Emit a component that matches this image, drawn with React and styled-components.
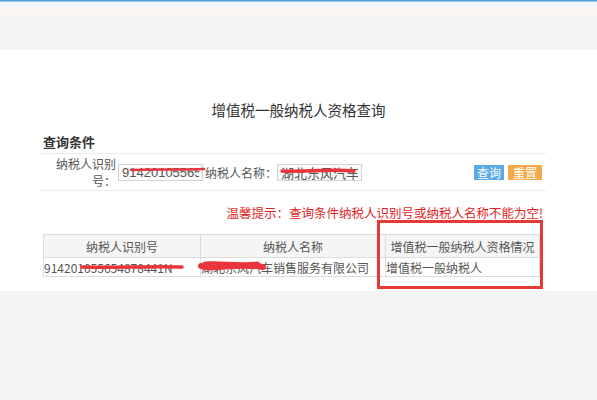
import styled, { createGlobalStyle } from 'styled-components';

const GlobalStyle = createGlobalStyle`
  html, body {
    margin: 0;
    padding: 0;
    background: #f4f4f4;
    font-family: "Noto Sans CJK SC", "Liberation Sans", sans-serif;
    color: #333;
  }
`;

// red pen marks drawn over the sensitive values
const redactions = [
  { d: 'M131 170 C150 169, 180 170, 204 169', w: 2.5 },
  { d: 'M282 171 C300 172, 330 169, 354 171', w: 3.5 },
  { d: 'M82 267 C110 268, 150 266, 182 267', w: 3.5 },
  { d: 'M201 266 C215 270, 235 263, 263 267', w: 6 },
  { d: 'M205 263 C220 262, 240 265, 258 263', w: 3 },
];

const App = () => {
  return (
    <>
      <GlobalStyle />
      <TopBar />
      <Main>
        <Title>增值税一般纳税人资格查询</Title>
        <Content>
          <SectionHead>查询条件</SectionHead>
          <FormRow>
            <FieldLabel>纳税人识别号：</FieldLabel>
            <Input value="91420105565" readOnly />
            <InlineLabel>纳税人名称：</InlineLabel>
            <Input value="湖北东风汽车销售服务有限公司" readOnly />
            <Buttons>
              <Button $color="#5aaae6">查询</Button>
              <Button $color="#f5a94a" $wide>重置</Button>
            </Buttons>
          </FormRow>
          <Hint>温馨提示：查询条件纳税人识别号或纳税人名称不能为空!</Hint>
          <Table>
            <thead>
              <tr>
                <Th $width={156}>纳税人识别号</Th>
                <Th $width={184}>纳税人名称</Th>
                <Th>增值税一般纳税人资格情况</Th>
              </tr>
            </thead>
            <tbody>
              <tr>
                <Td>914201055654878441N</Td>
                <Td>湖北东风汽车销售服务有限公司</Td>
                <Td>增值税一般纳税人</Td>
              </tr>
            </tbody>
          </Table>
        </Content>
        <Highlight />
      </Main>
      <Scribbles width="597" height="400" viewBox="0 0 597 400">
        {redactions.map((r, i) => (
          <path key={i} d={r.d} stroke="#e8343a" strokeWidth={r.w} strokeLinecap="round" fill="none" />
        ))}
      </Scribbles>
    </>
  );
};

const TopBar = styled.div`
  height: 50px;
  background: linear-gradient(
    to bottom,
    #4f9ed0 0,
    #4f9ed0 1px,
    #eaf4fa 2px,
    #fbf6f3 10px,
    #f4f4f4 16px
  );
`;

const Main = styled.div`
  position: relative;
  background: #fff;
  padding: 50px 0 14px;
`;

const Title = styled.div`
  text-align: center;
  font-size: 14.5px;
  line-height: 20px;
  color: #333;
`;

const Content = styled.div`
  width: 500px;
  margin-left: 43px;
`;

const SectionHead = styled.div`
  margin-top: 12px;
  font-size: 13px;
  font-weight: bold;
  line-height: 20px;
  color: #333;
`;

const FormRow = styled.div`
  display: flex;
  align-items: center;
  height: 36px;
  margin: 1px -3px 0;
  padding: 0 3px;
  border-top: 1px solid #ececec;
  border-bottom: 1px solid #ececec;
  font-size: 12px;
`;

const FieldLabel = styled.div`
  width: 73px;
  padding-right: 2px;
  text-align: right;
  line-height: 17px;
  color: #555;
`;

const InlineLabel = styled.span`
  margin-left: 2px;
  color: #555;
`;

const Input = styled.input`
  box-sizing: border-box;
  width: 85px;
  height: 17px;
  padding: 0 3px;
  border: 1px solid #d4d4d4;
  background: #fafafa;
  font-family: "Liberation Sans", "Noto Sans CJK SC", sans-serif;
  font-size: 13px;
  color: #555;
  outline: none;
`;

const Buttons = styled.div`
  display: flex;
  gap: 4px;
  margin-left: auto;
  margin-right: 1px;
`;

const Button = styled.button`
  width: ${(p) => (p.$wide ? 34 : 30)}px;
  height: 15px;
  padding: 0;
  border: none;
  background: ${(p) => p.$color};
  color: #fff;
  font-family: inherit;
  font-size: 12px;
  line-height: 15px;
`;

const Hint = styled.div`
  margin-top: 14px;
  text-align: right;
  font-size: 12.5px;
  line-height: 16px;
  color: #e01f1f;
`;

const Table = styled.table`
  width: 497px;
  margin-top: 13px;
  border-collapse: collapse;
  font-size: 12px;
  table-layout: fixed;
`;

const Th = styled.th`
  width: ${(p) => (p.$width ? `${p.$width}px` : 'auto')};
  height: 22px;
  padding: 0;
  border: 1px solid #dcdcdc;
  background: #f5f5f5;
  font-weight: normal;
  text-align: center;
  color: #555;
`;

const Td = styled.td`
  height: 18px;
  padding: 0;
  border: 1px solid #dcdcdc;
  white-space: nowrap;
  overflow: hidden;
  color: #555;
`;

const Highlight = styled.div`
  position: absolute;
  left: 377px;
  top: 170px;
  width: 160px;
  height: 63px;
  border: 3px solid #e53935;
`;

const Scribbles = styled.svg`
  position: absolute;
  left: 0;
  top: 0;
  pointer-events: none;
`;

export default App;
